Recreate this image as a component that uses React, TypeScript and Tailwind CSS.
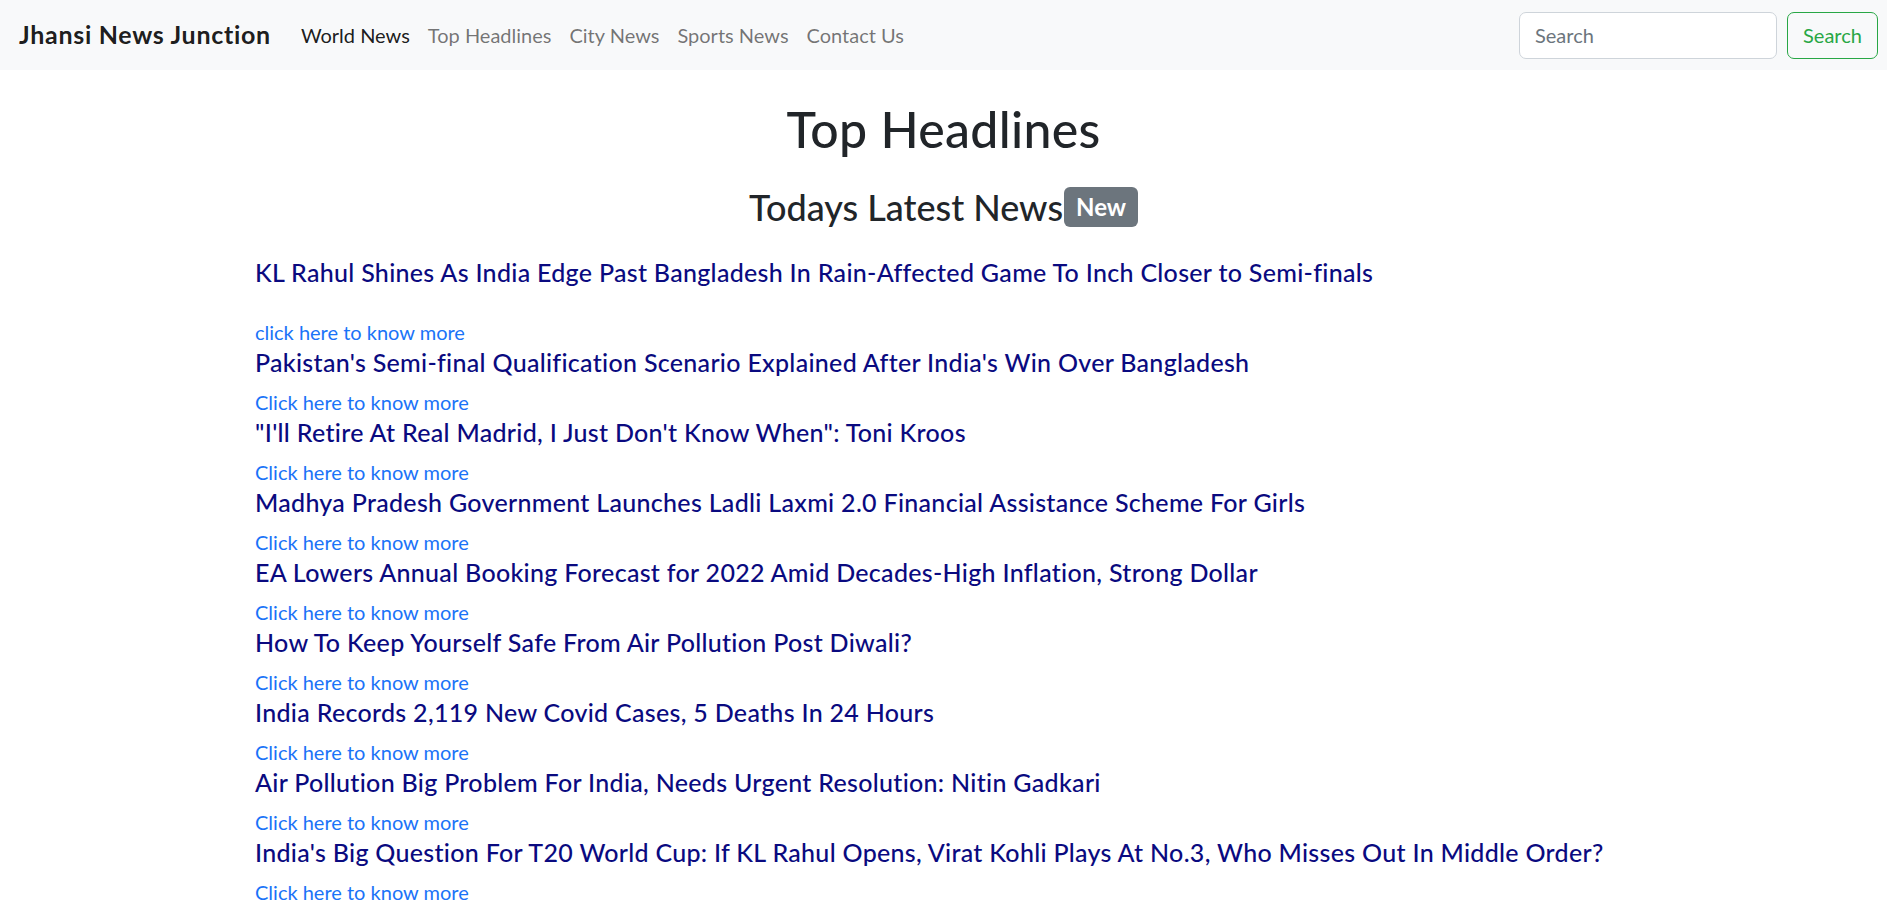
const news = [
  "Pakistan's Semi-final Qualification Scenario Explained After India's Win Over Bangladesh",
  '"I\'ll Retire At Real Madrid, I Just Don\'t Know When": Toni Kroos',
  'Madhya Pradesh Government Launches Ladli Laxmi 2.0 Financial Assistance Scheme For Girls',
  'EA Lowers Annual Booking Forecast for 2022 Amid Decades-High Inflation, Strong Dollar',
  'How To Keep Yourself Safe From Air Pollution Post Diwali?',
  'India Records 2,119 New Covid Cases, 5 Deaths In 24 Hours',
  'Air Pollution Big Problem For India, Needs Urgent Resolution: Nitin Gadkari',
  "India's Big Question For T20 World Cup: If KL Rahul Opens, Virat Kohli Plays At No.3, Who Misses Out In Middle Order?",
  'Rishabh Pant Or Dinesh Karthik? Former India Star Picks His Wicketkeeper For T20 World Cup',
];

const navLinks = ['World News', 'Top Headlines', 'City News', 'Sports News', 'Contact Us'];

export default function App() {
  return (
    <div className="min-h-screen bg-white text-[#212529] font-['Lato',sans-serif]">
      <nav className="h-[70px] bg-[#f8f9fa] flex items-center pl-[19px] pr-[9px]">
        <a className="text-[25px] font-bold tracking-[0.7px] text-[rgba(0,0,0,0.9)] mr-[21px]">Jhansi News Junction</a>
        <ul className="flex items-center text-[20px]">
          {navLinks.map((l, i) => (
            <li key={l}>
              <a className={`px-[9px] ${i === 0 ? 'text-[rgba(0,0,0,0.9)]' : 'text-[rgba(0,0,0,0.55)]'}`}>{l}</a>
            </li>
          ))}
        </ul>
        <form className="ml-auto flex items-center gap-[10px]">
          <input
            type="search"
            placeholder="Search"
            className="w-[258px] h-[47px] rounded-[7px] border border-[#ced4da] bg-white px-[15px] text-[20px] placeholder:text-[#6c757d] outline-none"
          />
          <button type="button" className="w-[91px] h-[47px] rounded-[7px] border border-[#28a745] text-[#28a745] text-[20px]">
            Search
          </button>
        </form>
      </nav>

      <main className="px-[255px]">
        <h1 className="text-center text-[50px] leading-[60px] font-medium tracking-[0.3px] mt-[29px]">Top Headlines</h1>
        <h2 className="text-center text-[36px] leading-[44px] font-medium mt-[26px] flex justify-center items-center">
          <span>Todays Latest News</span>
          <span className="ml-[1px] inline-flex items-center h-[40px] px-[12px] rounded-[6px] bg-[#6c757d] text-white text-[24px] font-bold">New</span>
        </h2>

        <div className="mt-[28px]">
          <h5 className="text-[25px] leading-[30px] font-medium tracking-[0.3px] text-[#0a0a80] mb-[30px]">
            KL Rahul Shines As India Edge Past Bangladesh In Rain-Affected Game To Inch Closer to Semi-finals
          </h5>
          <a className="block text-[20px] leading-[30px] text-[#1a73f8]">click here to know more</a>
          {news.map((n) => (
            <div key={n}>
              <h5 className="text-[25px] leading-[30px] font-medium tracking-[0.3px] text-[#0a0a80] mb-[10px]">{n}</h5>
              <a className="block text-[20px] leading-[30px] text-[#1a73f8]">Click here to know more</a>
            </div>
          ))}
        </div>
      </main>
    </div>
  );
}
